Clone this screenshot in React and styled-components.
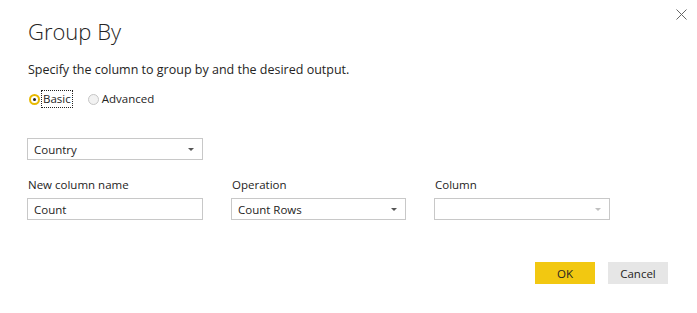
import React from "react";
import styled, { createGlobalStyle } from "styled-components";

const Global = createGlobalStyle`
  html, body { margin: 0; padding: 0; background: #fff; }
  body { font-family: "Open Sans", "Noto Sans", sans-serif; color: #252423; }
`;

const Dialog = styled.div`
  position: relative;
  width: 697px;
  height: 313px;
  box-sizing: border-box;
  padding: 15px 0 0 27px;
  display: flex;
  flex-direction: column;
`;

const Close = styled.button`
  position: absolute;
  top: 6px;
  right: 8px;
  width: 16px;
  height: 16px;
  padding: 0;
  border: 0;
  background: none;
  display: flex;
  align-items: center;
  justify-content: center;
`;

const Title = styled.h1`
  margin: 0 0 0 1px;
  font-weight: 300;
  font-size: 22px;
  line-height: 32px;
  color: #252423;
`;

const Subtitle = styled.p`
  margin: 14px 0 0 1px;
  font-size: 12.5px;
  line-height: 18px;
  color: #252423;
`;

const RadioRow = styled.div`
  display: flex;
  align-items: center;
  gap: 16px;
  margin-top: 12px;
  margin-left: 2px;
`;

const RadioLabel = styled.label`
  display: flex;
  align-items: center;
  gap: 2px;
  font-size: 11.5px;
  line-height: 16px;
  color: #252423;
`;

const RadioCircle = styled.span`
  width: 11px;
  height: 11px;
  border-radius: 50%;
  box-sizing: border-box;
  border: ${(p) => (p.$checked ? "2px solid #e8b900" : "1px solid #c6c6c6")};
  background: ${(p) => (p.$checked ? "#fff" : "#f2f2f2")};
  display: flex;
  align-items: center;
  justify-content: center;
  &::after {
    content: "";
    width: 3px;
    height: 3px;
    border-radius: 50%;
    background: ${(p) => (p.$checked ? "#252423" : "transparent")};
  }
`;

const RadioText = styled.span`
  padding: 0 1px;
  outline: ${(p) => (p.$focus ? "1px dotted #252423" : "none")};
  outline-offset: 0;
`;

const Select = styled.div`
  box-sizing: border-box;
  width: ${(p) => p.$w || 176}px;
  height: 22px;
  border: 1px solid #c8c8c8;
  display: flex;
  align-items: center;
  justify-content: space-between;
  padding: 0 8px 0 6px;
  font-size: 11.5px;
  color: #252423;
  background: #fff;
`;

const Caret = styled.span`
  width: 0;
  height: 0;
  border-left: 3px solid transparent;
  border-right: 3px solid transparent;
  border-top: 3px solid ${(p) => (p.$muted ? "#c0c0c0" : "#555")};
`;

const TopSelectWrap = styled.div`
  margin-top: 31px;
`;

const Fields = styled.div`
  display: grid;
  grid-template-columns: 176px 175px 176px;
  column-gap: 28px;
  row-gap: 5px;
  margin-top: 17px;
`;

const FieldLabel = styled.div`
  font-size: 11.5px;
  line-height: 16px;
  padding-left: 1px;
  color: #252423;
`;

const Input = styled.div`
  box-sizing: border-box;
  height: 22px;
  border: 1px solid #c8c8c8;
  display: flex;
  align-items: center;
  padding: 0 6px;
  font-size: 11.5px;
`;

const Footer = styled.div`
  display: flex;
  gap: 13px;
  margin-top: 42px;
  margin-left: 508px;
`;

const Button = styled.button`
  width: 60px;
  height: 22px;
  border: 0;
  padding: 0;
  font-family: inherit;
  font-size: 11.5px;
  color: #252423;
  background: ${(p) => (p.$primary ? "#f2c811" : "#e6e6e6")};
`;

export default function App() {
  return (
    <>
      <Global />
      <Dialog>
        <Close aria-label="Close">
          <svg width="11" height="11" viewBox="0 0 11 11">
            <path d="M0.5 0.5 L10.5 10.5 M10.5 0.5 L0.5 10.5" stroke="#666" strokeWidth="1" />
          </svg>
        </Close>
        <Title>Group By</Title>
        <Subtitle>Specify the column to group by and the desired output.</Subtitle>
        <RadioRow>
          <RadioLabel>
            <RadioCircle $checked />
            <RadioText $focus>Basic</RadioText>
          </RadioLabel>
          <RadioLabel>
            <RadioCircle />
            <RadioText>Advanced</RadioText>
          </RadioLabel>
        </RadioRow>
        <TopSelectWrap>
          <Select>
            <span>Country</span>
            <Caret />
          </Select>
        </TopSelectWrap>
        <Fields>
          <FieldLabel>New column name</FieldLabel>
          <FieldLabel>Operation</FieldLabel>
          <FieldLabel>Column</FieldLabel>
          <Input>Count</Input>
          <Select $w={175}>
            <span>Count Rows</span>
            <Caret />
          </Select>
          <Select>
            <span />
            <Caret $muted />
          </Select>
        </Fields>
        <Footer>
          <Button $primary>OK</Button>
          <Button>Cancel</Button>
        </Footer>
      </Dialog>
    </>
  );
}
